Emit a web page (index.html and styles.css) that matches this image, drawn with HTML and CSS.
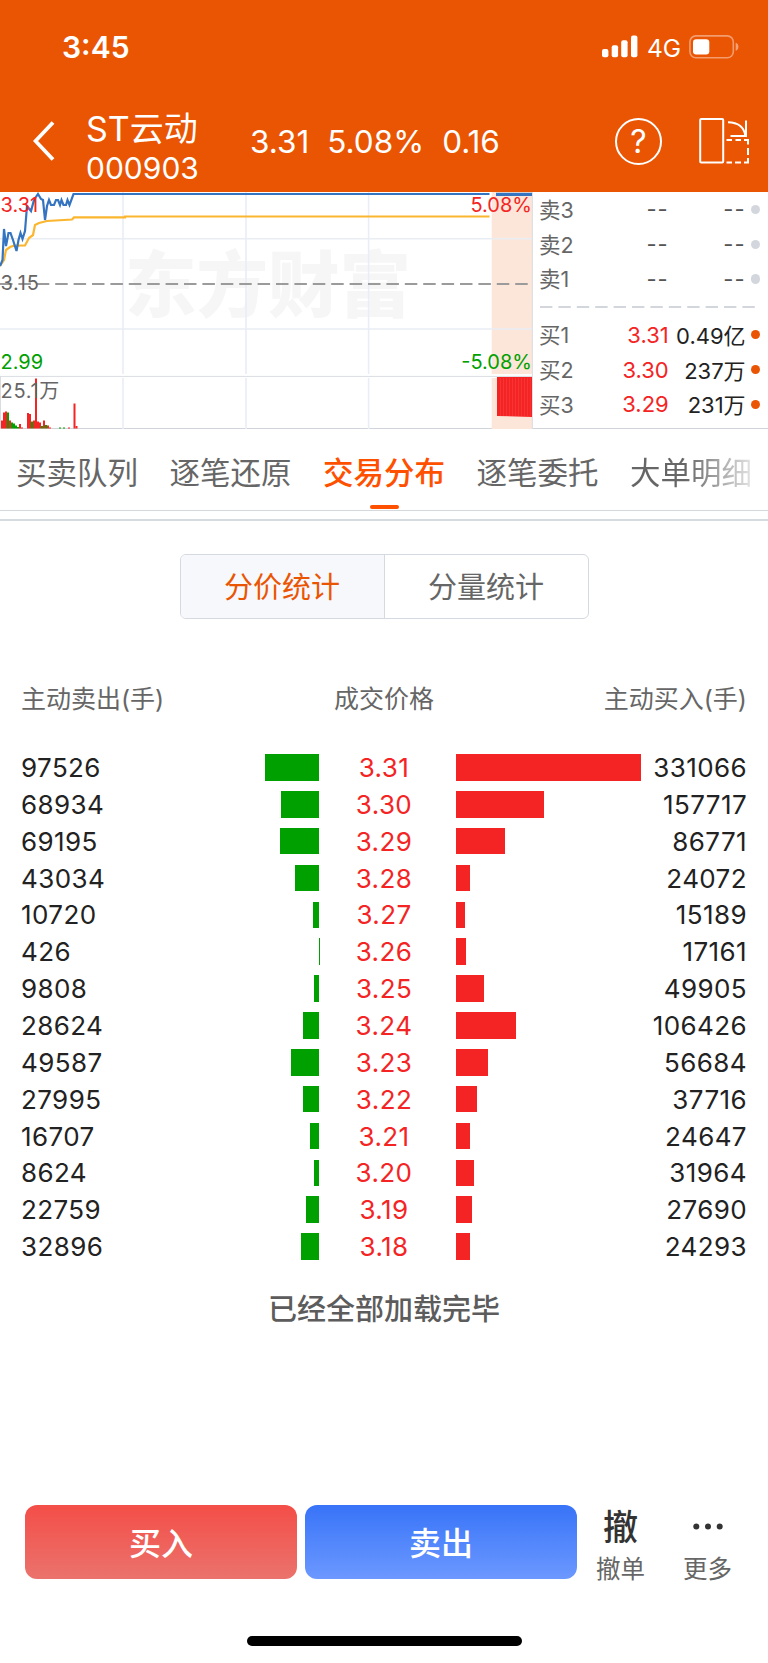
FILE: index.html
```
<!DOCTYPE html>
<html lang="zh-CN">
<head>
    <meta charset="UTF-8">
    <meta name="viewport" content="width=device-width, initial-scale=1.0">
    <title>ST云动 000903</title>
    <link rel="stylesheet" href="styles.css">
</head>
<body>
    <header class="header">
        <div class="status-bar">
            <span class="time">3:45</span>
            <div class="status-icons">
                <svg class="signal" width="36" height="24" viewBox="0 0 36 24" fill="#fff">
                    <rect x="0" y="14" width="6.4" height="8.3" rx="2"/>
                    <rect x="9.7" y="10.2" width="6.4" height="12.1" rx="2"/>
                    <rect x="19.2" y="5.2" width="6.4" height="17.1" rx="2"/>
                    <rect x="29" y="0.5" width="6.4" height="21.8" rx="2"/>
                </svg>
                <span class="network">4G</span>
                <svg class="battery" width="50" height="24" viewBox="0 0 50 24">
                    <rect x="0.9" y="0.9" width="43.4" height="21.8" rx="6" fill="none" stroke="#fff" stroke-opacity="0.42" stroke-width="1.6"/>
                    <rect x="4" y="4.2" width="16.3" height="15.2" rx="3.2" fill="#fff"/>
                    <path d="M46.7 7.8 Q49.4 8.6 49.4 11.8 Q49.4 15 46.7 15.8 Z" fill="#fff" fill-opacity="0.45"/>
                </svg>
            </div>
        </div>
        <div class="title-bar">
            <svg class="back" width="22" height="40" viewBox="0 0 22 40">
                <path d="M20 1.5 L2.5 20 L20 38.5" fill="none" stroke="#fff" stroke-width="3.8"/>
            </svg>
            <div class="stock">
                <div class="stock-name">ST云动</div>
                <div class="stock-code">000903</div>
            </div>
            <div class="quote">
                <span>3.31</span>
                <span>5.08%</span>
                <span>0.16</span>
            </div>
            <div class="help">?</div>
            <svg class="rotate" width="52" height="48" viewBox="0 0 52 48" fill="none" stroke="#fff" stroke-width="2">
                <rect x="1.2" y="2" width="23" height="43.6" rx="1"/>
                <path d="M29 5.3 C39 5.5 45 10 46.3 18.5 M47 3.6 V19 H31.5"/>
                <path d="M27.5 23 H33 M36.5 23 H42 M45 23 H49 V27.5 M49 31 V38 M49 41 V45.6 H45 M42 45.6 H36 M33 45.6 H27.5"/>
            </svg>
        </div>
    </header>

    <section class="market">
        <svg class="chart" width="533" height="237" viewBox="0 0 533 237">
            <rect x="491.7" y="0" width="40.6" height="182" fill="#fbe6d9"/>
            <rect x="491.7" y="186" width="40.6" height="51" fill="#fbe6d9"/>
            <text class="watermark" x="125" y="119">东方财富</text>
            <path class="grid" d="M0 46.8 H532 M0 137 H532 M123 0 V182 M246 0 V182 M368.6 0 V182 M123 186 V237 M246 186 V237 M368.6 186 V237"/>
            <path d="M0 184.4 H532 M532.4 0 V237 M0.5 184 V237" stroke="#d9dde2" fill="none"/>
            <path d="M0 92 H532" stroke="#9b9b9b" stroke-width="1.8" stroke-dasharray="12.5 5.9"/>
            <path d="M0 74 L4 68 L6 58 L10 55 L14 53.7 L25 53.4 L29 46 L33 43 L35 33 L39 31 L47 29 L72 27.5 L74 25.4 H125 V24.5 H489.5" fill="none" stroke="#fbb62f" stroke-width="2.2"/>
            <path d="M0 74 L2.5 68 L4 37 L6 54 L8.5 41 H10.5 L13 48 L16.5 59 L18.5 48 L20.5 41 L22.5 47 L25 39 L27 14 L31 19 L34 8 L38 2 L41 7 L43 8 L45 28 L47 14 L49 8 L51 13 H54 L56 8 H58 L60 13 L61.5 8 L63.5 13 H66 L67.5 8 L69.5 13 L73.5 2 H489.5" fill="none" stroke="#3474c0" stroke-width="2.2"/>
            <rect x="496" y="0.8" width="36" height="3.2" fill="#3474c0"/>
            <g id="volume"></g>
            <path d="M497 185 H532 V225 L497 224 Z" fill="#f42424"/>
            <path d="M500.5 186 V224 M503.5 186 V224 M506.5 186 V224 M509.5 186 V224 M512.5 186 V224 M515.5 186 V224 M518.5 186 V224 M521.5 186 V224 M524.5 186 V224 M527.5 186 V224 M530.3 186 V224" stroke="#f8403e" stroke-width="0.6"/>
            <text class="up" x="0.5" y="19.6">3.31</text>
            <text class="mid" x="0.5" y="98.4">3.15</text>
            <text class="down" x="0.5" y="177">2.99</text>
            <text class="mid" x="0.5" y="206.2">25.1万</text>
            <text class="up" x="532" y="19.6" text-anchor="end">5.08%</text>
            <text class="down" x="532" y="177" text-anchor="end">-5.08%</text>
        </svg>
        <div class="order-book">
            <div class="order"><span class="level">卖3</span><span class="price none">--</span><span class="amount none">--</span><i class="dot"></i></div>
            <div class="order"><span class="level">卖2</span><span class="price none">--</span><span class="amount none">--</span><i class="dot"></i></div>
            <div class="order"><span class="level">卖1</span><span class="price none">--</span><span class="amount none">--</span><i class="dot"></i></div>
            <svg class="divider" width="216" height="2" viewBox="0 0 216 2">
                <path d="M0 1 H216" stroke="#d3d7dd" stroke-width="2" stroke-dasharray="12.4 6"/>
            </svg>
            <div class="order"><span class="level">买1</span><span class="price">3.31</span><span class="amount">0.49亿</span><i class="dot buy"></i></div>
            <div class="order"><span class="level">买2</span><span class="price">3.30</span><span class="amount">237万</span><i class="dot buy"></i></div>
            <div class="order"><span class="level">买3</span><span class="price">3.29</span><span class="amount">231万</span><i class="dot buy"></i></div>
        </div>
    </section>

    <nav class="tabs">
        <a>买卖队列</a>
        <a>逐笔还原</a>
        <a class="active">交易分布</a>
        <a>逐笔委托</a>
        <a class="fade">大单明细</a>
    </nav>

    <main class="content">
        <div class="segment">
            <button class="selected">分价统计</button>
            <button>分量统计</button>
        </div>
        <div class="table-head">
            <span>主动卖出(手)</span>
            <span>成交价格</span>
            <span>主动买入(手)</span>
        </div>
        <div class="table" id="priceTable"></div>
        <p class="loaded">已经全部加载完毕</p>
    </main>

    <footer class="footer">
        <button class="trade buy-btn">买入</button>
        <button class="trade sell-btn">卖出</button>
        <div class="action">
            <span class="action-icon">撤</span>
            <span>撤单</span>
        </div>
        <div class="action more">
            <svg class="action-icon" width="32" height="43" viewBox="0 0 32 43" fill="#333">
                <circle cx="4.3" cy="19.5" r="3"/>
                <circle cx="16" cy="19.5" r="3"/>
                <circle cx="27.7" cy="19.5" r="3"/>
            </svg>
            <span>更多</span>
        </div>
    </footer>
    <div class="home-indicator"></div>

    <script>
        // price, active sell, active buy
        const rows = [
            ['3.31', 97526, 331066],
            ['3.30', 68934, 157717],
            ['3.29', 69195, 86771],
            ['3.28', 43034, 24072],
            ['3.27', 10720, 15189],
            ['3.26', 426, 17161],
            ['3.25', 9808, 49905],
            ['3.24', 28624, 106426],
            ['3.23', 49587, 56684],
            ['3.22', 27995, 37716],
            ['3.21', 16707, 24647],
            ['3.20', 8624, 31964],
            ['3.19', 22759, 27690],
            ['3.18', 32896, 24293]
        ];
        const maxBar = 185;
        const maxVolume = 331066;

        document.getElementById('priceTable').innerHTML = rows.map(([price, sell, buy]) => `
            <div class="row">
                <span class="sell">${sell}</span>
                <div class="bar-cell left"><div class="bar green" style="width: ${(sell / maxVolume * maxBar).toFixed(1)}px"></div></div>
                <span class="row-price">${price}</span>
                <div class="bar-cell"><div class="bar red" style="width: ${(buy / maxVolume * maxBar).toFixed(1)}px"></div></div>
                <span class="buy">${buy}</span>
            </div>
        `).join('');

        // volume bars: x, height, color
        const volume = [
            [1, 8, 'r'], [3, 16, 'r'], [5, 17, 'r'], [7, 16, 'g'], [9, 8, 'r'], [11, 6, 'g'], [13, 5, 'g'], [15, 3, 'g'], [17, 1.5, 'g'],
            [19, 4.5, 'r'], [21, 1, 'r'], [27, 15.5, 'r'], [29, 14.5, 'r'], [31, 7, 'g'], [33, 8, 'r'], [35, 50, 'r'], [37, 7, 'r'], [39, 6, 'r'],
            [41, 2.5, 'g'], [43, 8, 'r'], [45, 3.5, 'g'], [47, 3, 'r'], [49, 1, 'r'], [59, 1, 'g'], [63, 1, 'g'], [68, 1, 'r'],
            [73.5, 25, 'r'], [75.5, 2.5, 'r']
        ];
        document.getElementById('volume').innerHTML = volume.map(([x, h, c]) =>
            `<rect x="${x}" y="${236.5 - h}" width="2" height="${h}" fill="${c === 'r' ? '#f42424' : '#00a000'}"/>`
        ).join('');
    </script>
</body>
</html>
```
FILE: styles.css
```
* {
    box-sizing: border-box;
}
body {
    margin: 0;
    width: 768px;
    height: 1663px;
    background-color: #fff;
    color: #222;
    font-family: Inter, "Noto Sans CJK SC", sans-serif;
    display: flex;
    flex-direction: column;
    overflow: hidden;
}
button {
    border: none;
    padding: 0;
    background: none;
    font-family: inherit;
}
.header {
    height: 192px;
    background-color: #ea5504;
    color: #fff;
    flex: none;
}
.status-bar {
    height: 94px;
    padding: 0 29px 0 62px;
    display: flex;
    justify-content: space-between;
    align-items: center;
}
.time {
    font-size: 30px;
    font-weight: 600;
    line-height: 36px;
}
.status-icons {
    display: flex;
    align-items: center;
}
.network {
    margin: 2px 9px 0 9px;
    font-size: 24.5px;
    line-height: 28px;
    width: 33px;
}
.title-bar {
    height: 98px;
    padding-left: 33px;
    display: flex;
    align-items: center;
}
.back {
    margin-bottom: 4px;
}
.stock {
    width: 164px;
    margin-left: 31px;
    padding-top: 9px;
}
.stock-name {
    font-size: 34px;
    line-height: 41px;
}
.stock-code {
    font-size: 30px;
    line-height: 38px;
}
.quote {
    width: 365px;
    display: flex;
    gap: 18px;
    font-size: 31.5px;
    line-height: 40px;
    margin-bottom: 2px;
}
.help {
    width: 47px;
    height: 47px;
    margin-bottom: 4px;
    border: 2px solid #fff;
    border-radius: 50%;
    text-align: center;
    font-size: 32px;
    line-height: 44px;
}
.rotate {
    margin: 0 0 4px 37px;
}
.market {
    height: 237px;
    display: flex;
    border-bottom: 1px solid #cfd5da;
    flex: none;
}
.chart {
    display: block;
    font-size: 20px;
}
.watermark {
    font-size: 71.5px;
    font-weight: 900;
    fill: #f6f6f6;
}
.grid {
    fill: none;
    stroke: #e9edf4;
    stroke-width: 1.6;
}
.up {
    fill: #f42424;
}
.mid {
    fill: #666;
    letter-spacing: 0.7px;
}
.down {
    fill: #00a000;
}
.order-book {
    width: 235px;
    padding: 0 8px 0 6px;
}
.order {
    height: 34.8px;
    display: flex;
    align-items: center;
    font-size: 22px;
}
.level {
    width: 39px;
    padding-bottom: 2px;
    color: #666;
    font-size: 21.5px;
}
.price {
    width: 91px;
    text-align: right;
    color: #f42424;
}
.amount {
    width: 77px;
    padding-bottom: 2px;
    text-align: right;
    white-space: nowrap;
    font-size: 22px;
}
.order .none {
    color: #555;
    letter-spacing: 1px;
    padding: 0;
}
.dot {
    width: 9.4px;
    height: 9.4px;
    margin-left: 5px;
    border-radius: 50%;
    background-color: #d3d7dd;
}
.dot.buy {
    background-color: #ea5504;
}
.divider {
    display: block;
    margin: 10px 0 9px 1px;
}
.tabs {
    height: 82px;
    padding: 0 16px;
    display: flex;
    justify-content: space-between;
    border-bottom: 1px solid #d3d9dd;
    font-size: 30.5px;
    line-height: 87px;
    color: #666;
    flex: none;
}
.tabs a {
    white-space: nowrap;
}
.tabs .active {
    position: relative;
    color: #ff5000;
    font-weight: 500;
}
.tabs .active::after {
    content: "";
    position: absolute;
    left: 50%;
    top: 76px;
    width: 29px;
    height: 4px;
    margin-left: -14.5px;
    border-radius: 2px;
    background-color: #ff5000;
}
.tabs .fade {
    background: linear-gradient(90deg, #666 45%, #e4e4e4 100%);
    -webkit-background-clip: text;
    background-clip: text;
    color: transparent;
}
.content {
    margin-top: 8px;
    border-top: 2px solid #d5dbe0;
    flex: 1;
}
.segment {
    width: 409px;
    height: 65px;
    margin: 33px auto 0;
    display: flex;
    border: 1px solid #d5d9e0;
    border-radius: 6px;
    overflow: hidden;
}
.segment button {
    flex: 1;
    padding-bottom: 3px;
    font-size: 29px;
    color: #666;
}
.segment .selected {
    background-color: #f7f8fb;
    border-right: 1px solid #d5d9e0;
    color: #ea5504;
}
.table-head {
    margin-top: 60px;
    padding: 0 21px;
    display: grid;
    grid-template-columns: 1fr 1fr 1fr;
    font-size: 25px;
    line-height: 40px;
    color: #666;
}
.table-head span:nth-child(2) {
    text-align: center;
}
.table-head span:nth-child(3) {
    text-align: right;
}
.table {
    margin-top: 30px;
    padding: 0 21px;
}
.row {
    height: 36.87px;
    display: grid;
    grid-template-columns: 113px 185px 137px 185px 106px;
    align-items: center;
    font-size: 26px;
    letter-spacing: 0.4px;
}
.row-price {
    padding-right: 7px;
    text-align: center;
    color: #f42424;
}
.bar-cell {
    display: flex;
}
.bar-cell.left {
    justify-content: flex-end;
}
.bar {
    height: 26.5px;
}
.green {
    background-color: #00a000;
}
.red {
    background-color: #f42424;
}
.row .buy {
    text-align: right;
}
.loaded {
    margin: 23px 0 0;
    text-align: center;
    font-size: 29px;
    line-height: 44px;
    font-weight: 500;
    color: #5c5c5c;
}
.footer {
    height: 74px;
    margin: 0 0 57px 25px;
    display: flex;
    flex: none;
}
.trade {
    width: 272px;
    height: 74px;
    margin-right: 8px;
    padding-bottom: 3px;
    border-radius: 12px;
    color: #fff;
    font-size: 32px;
    font-weight: 500;
}
.buy-btn {
    background: linear-gradient(#f44e48, #eb736d);
}
.sell-btn {
    background: linear-gradient(#3874f8, #6c98ff);
}
.action {
    width: 71px;
    padding-top: 2px;
    display: flex;
    flex-direction: column;
    align-items: center;
    font-size: 24.5px;
    line-height: 38px;
    color: #666;
}
.action-icon {
    height: 43px;
    font-size: 35px;
    line-height: 41px;
    font-weight: 500;
    color: #333;
    flex: none;
}
.more {
    margin-left: 16px;
}
.home-indicator {
    width: 275px;
    height: 10px;
    margin: 0 auto 17px;
    border-radius: 5px;
    background-color: #000;
    flex: none;
}
```
